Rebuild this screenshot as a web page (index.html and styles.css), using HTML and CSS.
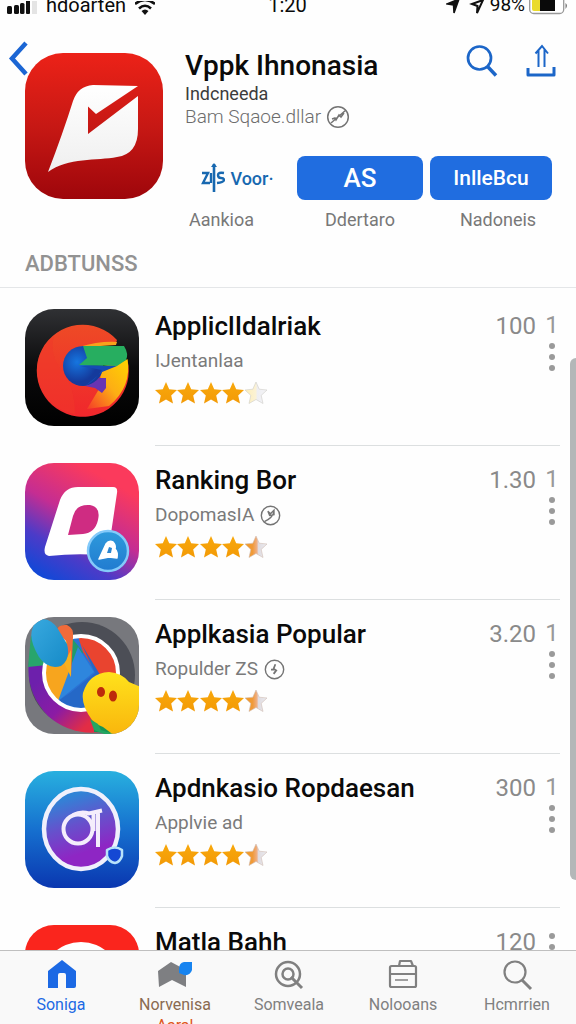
FILE: index.html
```html
<!DOCTYPE html>
<html lang="id">
<head>
<meta charset="utf-8">
<meta name="viewport" content="width=device-width, initial-scale=1">
<title>Vppk Ihnonasia</title>
<link rel="stylesheet" href="styles.css">
</head>
<body>
<svg class="defs" aria-hidden="true">
  <defs>
    <linearGradient id="gold" x1="0" y1="0" x2="0" y2="1"><stop offset="0" stop-color="#f8a80c"/><stop offset="1" stop-color="#f39a06"/></linearGradient>
    <linearGradient id="fade" x1="0" y1="0" x2="1" y2="0"><stop offset="0" stop-color="#fdeeb8"/><stop offset=".5" stop-color="#fbf2d6"/><stop offset=".55" stop-color="#eeeef2"/><stop offset="1" stop-color="#f4f4f6"/></linearGradient>
    <linearGradient id="half" x1="0" y1="0" x2="1" y2="0"><stop offset="0" stop-color="#f39a1c"/><stop offset=".35" stop-color="#f09a3a"/><stop offset=".55" stop-color="#efb088"/><stop offset=".6" stop-color="#dfdbe0"/><stop offset="1" stop-color="#ececf0"/></linearGradient>
    <path id="star" d="M10 0L13.200 7.200 21 8 15.200 13.400 17 21.500 10 17.500 3 21.500 4.800 13.400-1 8 6.800 7.200Z"/>
    <symbol id="stars4" viewBox="-1 0 112 22">
      <g fill="url(#gold)"><use href="#star"/><use href="#star" x="22"/><use href="#star" x="45"/><use href="#star" x="67"/></g>
      <use href="#star" x="90" fill="url(#fade)" stroke="#cfccc8" stroke-width=".6"/>
    </symbol>
    <symbol id="stars45" viewBox="-1 0 112 22">
      <g fill="url(#gold)"><use href="#star"/><use href="#star" x="22"/><use href="#star" x="45"/><use href="#star" x="67"/></g>
      <use href="#star" x="90" fill="url(#half)" stroke="#d0bcb4" stroke-width=".6"/>
    </symbol>
  </defs>
</svg>
<div class="screen">
  <div class="status">
    <div class="status-side">
      <svg viewBox="0 0 30 14" width="30" height="14"><g fill="#111"><rect x="0" y="5" width="5" height="8" rx="1.500"/><rect x="7" y="4" width="5" height="9" rx="1.500"/><rect x="13" y="2" width="4.500" height="11" rx="1.500"/><rect x="19" y="-2" width="4" height="15" rx="1"/></g><rect x="25" y="-2" width="5" height="15" fill="#e4e4e4"/></svg>
      <span>hdoarten</span>
      <svg viewBox="0 0 20 14" width="20" height="14"><g fill="none" stroke="#111" stroke-width="2.600"><path d="M0 3Q10-5 20 3"/><path d="M4 7.500Q10 2 16 7.500"/></g><path d="M6.500 10Q10 7 13.500 10L10 14z" fill="#111"/></svg>
    </div>
    <span>1:20</span>
    <div class="status-side status-end">
      <svg viewBox="0 0 40 16" width="40" height="16"><path d="M1 5L13 0 8 14 7.500 6z" fill="#111" stroke="#111" stroke-width="1.500"/><path d="M26 5L37 1 31 14 31.500 7z" fill="none" stroke="#111" stroke-width="2"/></svg>
      <span class="percent">98%</span>
      <svg viewBox="0 0 39 16" width="39" height="16"><rect x=".7" y="-6" width="34" height="20.500" rx="4" fill="#fff" stroke="#999" stroke-width="1.300"/><path d="M3 0h8v12H5q-2 0-2-2z" fill="#eadb2c"/><path d="M11 0h15v12H11z" fill="#0a0a0a"/><path d="M36.500 4q3 2.500 0 6z" fill="#777"/></svg>
    </div>
  </div>

  <header class="hero">
    <button class="back" aria-label="Back"><svg viewBox="0 0 20 36" width="20" height="36"><path d="M18 2L4 17.500 18 33" fill="none" stroke="#1c66d4" stroke-width="4.500"/></svg></button>
    <svg class="hero-icon" viewBox="0 0 138 146">
      <defs><linearGradient id="red" x1="0" y1="0" x2="0" y2="1"><stop offset="0" stop-color="#ec2218"/><stop offset=".5" stop-color="#c71814"/><stop offset="1" stop-color="#9e060b"/></linearGradient><linearGradient id="paper" x1="0" y1="0" x2="0" y2="1"><stop offset="0" stop-color="#fff"/><stop offset="1" stop-color="#efefef"/></linearGradient></defs>
      <rect width="138" height="146" rx="38" fill="url(#red)"/>
      <path d="M23 119Q38 80 48 48 53 33 68 32L113 33 71 61 63 53.500V81L113 43V76Q113 101 92 104C72 108 43 104 23 119Z" fill="url(#paper)"/>
    </svg>
    <div class="info">
      <div class="headline">
        <h1>Vppk Ihnonasia</h1>
        <div class="tools">
          <button aria-label="Search"><svg viewBox="0 0 32 34" width="32" height="34"><g fill="none" stroke="#1c66c8" stroke-width="2.700"><circle cx="13.500" cy="14" r="11.500"/><path d="M21.500 22.500L30 31.500" stroke-width="3.500"/></g></svg></button>
          <button aria-label="Share"><svg viewBox="0 0 30 34" width="30" height="34"><g fill="none" stroke="#1c66c8" stroke-width="2"><path d="M2 24V31H28V23" stroke-width="3" stroke-linejoin="round"/><path d="M12.500 23V6M18.500 23V5M9.500 9.500L16 2 22 9.500"/></g></svg></button>
        </div>
      </div>
      <p class="maker">Indcneeda</p>
      <p class="origin">Bam Sqaoe.dllar <svg viewBox="0 0 24 24" width="24" height="24"><g fill="none" stroke="#747474" stroke-width="1.500"><circle cx="12" cy="12" r="10.300"/><path d="M5 18L20 5M6 14l3-1 1 2 3-5 2 2 3-4" /></g></svg></p>
      <div class="actions">
        <div><button class="plain" aria-label="Zijs Voor"><svg viewBox="0 0 24 32" width="24" height="32"><g fill="none" stroke="#1768b0" stroke-width="2.400"><path d="M1 11H7L2 21H9M10 11V21M23 11Q17 10 17 13T20 16 23 18 16 21"/><path d="M13 2V30" stroke-width="2.600"/></g><path d="M10 5L13 1 16 5z" fill="#1768b0"/></svg>Voor·</button><span>Aankioa</span></div>
        <div><button class="solid big">AS</button><span>Ddertaro</span></div>
        <div><button class="solid">InlleBcu</button><span>Nadoneis</span></div>
      </div>
    </div>
  </header>

  <h2>ADBTUNSS</h2>

  <main class="list">
    <article class="row">
      <svg class="app" viewBox="0 0 114 117">
        <defs><linearGradient id="blk" x1="0" y1="0" x2="0" y2="1"><stop offset="0" stop-color="#303134"/><stop offset=".5" stop-color="#0b0b0c"/><stop offset="1" stop-color="#000"/></linearGradient><linearGradient id="orb" x1="0" y1="0" x2="0" y2="1"><stop offset="0" stop-color="#ee4a26"/><stop offset="1" stop-color="#f0272c"/></linearGradient><radialGradient id="blu" cx=".35" cy=".4"><stop offset="0" stop-color="#1676e0"/><stop offset="1" stop-color="#143a9c"/></radialGradient><linearGradient id="yel" x1="1" y1="0" x2="0" y2="1"><stop offset="0" stop-color="#ffd400"/><stop offset=".5" stop-color="#fdae14"/><stop offset="1" stop-color="#f43b28"/></linearGradient></defs>
        <rect width="114" height="117" rx="29" fill="url(#blk)"/>
        <path d="M92 31A46 46 0 1 0 102.500 51L75 58 62 37 91 34Z" fill="url(#orb)"/>
        <path d="M29 27Q24 46 37 62T50 105Q24 101 14 74 6 46 29 27Z" fill="#f0382a" opacity=".5"/>
        <path d="M102.500 50Q107 78 84 97L62 100 74 80 76 63 90 57Z" fill="url(#yel)"/>
        <path d="M54 38Q74 32 92 33L91 36 60 38Z" fill="#f9a21c"/>
        <circle cx="58" cy="57" r="20" fill="url(#blu)"/>
        <path d="M58 37H99Q104 45 101 51L92 57 54 56 62 49Z" fill="#27ae60"/>
        <path d="M55 57L92 57 77 63 71 68 60 77Q70 72 77 61Z" fill="#154cb4"/>
        <path d="M60 77Q70 74 74 69L81 69V79L77 84 70 79Z" fill="#6834b2"/>
      </svg>
      <div class="body">
        <div class="text"><h3>AppliclIdalriak</h3><p>IJentanlaa</p><svg class="stars" role="img" aria-label="4 stars"><use href="#stars4"/></svg></div>
        <span class="size">100</span>
        <button class="more" aria-label="More">1<i></i><i></i><i></i></button>
      </div>
    </article>
    <article class="row">
      <svg class="app" viewBox="0 0 114 117">
        <defs><linearGradient id="mix" x1=".15" y1="1" x2=".65" y2=".1"><stop offset="0" stop-color="#0c49d8"/><stop offset=".3" stop-color="#4c3bc8"/><stop offset=".6" stop-color="#c52d92"/><stop offset="1" stop-color="#fb3a5c"/></linearGradient><linearGradient id="badge" x1="0" y1="0" x2="0" y2="1"><stop offset="0" stop-color="#2e9adc"/><stop offset="1" stop-color="#217bd0"/></linearGradient></defs>
        <rect width="114" height="117" rx="29" fill="url(#mix)"/>
        <path d="M24 93Q18 92 20 84L35 37Q40 24 53 24H88Q93 24 92 30L84 84 76 92Q50 90 24 93Z" fill="#fff"/>
        <path d="M43 72L48 53Q51 41 65 42 76 44 73 57 70 70 58 71Z" fill="#cf2c82"/>
        <circle cx="83" cy="88" r="20" fill="url(#badge)" stroke="#84cafa" stroke-width="2.500"/>
        <path d="M74 96L81 81Q84 77 88 79 91 82 90 86 93 89 92 95L84 94Z" fill="#fff" stroke="#fff" stroke-width="1.500" stroke-linejoin="round"/><path d="M82 90L84 84 87 85 86 90Z" fill="#2b86d0"/>
      </svg>
      <div class="body">
        <div class="text"><h3>Ranking Bor</h3><p>DopomasIA <svg viewBox="0 0 24 24" width="21" height="21"><g fill="none" stroke="#747474" stroke-width="1.600"><circle cx="12" cy="12" r="10.500"/><path d="M5 19Q14 15 16 8M9 7l3 3 4-4v5l-5 1z"/></g></svg></p><svg class="stars" role="img" aria-label="4.5 stars"><use href="#stars45"/></svg></div>
        <span class="size">1.30</span>
        <button class="more" aria-label="More">1<i></i><i></i><i></i></button>
      </div>
    </article>
    <article class="row">
      <svg class="app" viewBox="0 0 114 117">
        <defs><clipPath id="tile"><rect width="114" height="117" rx="29"/></clipPath><clipPath id="disc"><circle cx="56" cy="56" r="37"/></clipPath><linearGradient id="pur" x1="0" y1="0" x2="1" y2="1"><stop offset=".2" stop-color="#6d20ac"/><stop offset=".55" stop-color="#8b1ba4"/><stop offset=".85" stop-color="#e22d45"/></linearGradient><linearGradient id="sky" x1="0" y1="0" x2="1" y2="1"><stop offset="0" stop-color="#38a9df"/><stop offset="1" stop-color="#168ac7"/></linearGradient><linearGradient id="sun" x1="0" y1="0" x2="0" y2="1"><stop offset="0" stop-color="#ffe21c"/><stop offset="1" stop-color="#f9b40c"/></linearGradient></defs>
        <g clip-path="url(#tile)">
          <rect width="114" height="117" fill="#77787d"/>
          <circle cx="57" cy="58" r="53" fill="#4c4e56"/>
          <path d="M4 44Q0 75 23 99 46 119 76 115L64 74 22 46Z" fill="url(#pur)"/>
          <path d="M6 18L22 48 3 50Z" fill="#28a56c"/>
          <circle cx="56" cy="56" r="37" fill="#2b72d4"/>
          <g clip-path="url(#disc)"><path d="M18 16H46L46 66 33 84 18 76Z" fill="#f7a51e"/><path d="M52 16H96V62H76L58 35Z" fill="#e9442f"/><path d="M46 20L58 35 46 62Z" fill="#209a6c"/><path d="M57 28L70 56 45 76 33 84 66 96 80 66Z" fill="#2568c7"/><path d="M53 30L69 55 33 84Z" fill="#2e86dd"/></g>
          <circle cx="56" cy="56" r="37" fill="none" stroke="#fff" stroke-width="4"/>
          <path d="M31 14Q33 7 42 8 49 11 48 20L46 60 40 42 42 25Z" fill="#f06b3a"/>
          <path d="M46 33V60L39 46Z" fill="#f7b01e"/>
          <path d="M10 4Q24-2 33 12L42 27Q46 42 36 49 23 53 14 40 4 23 7 13Z" fill="url(#sky)"/>
          <path d="M67 103Q56 88 58 76 64 56 84 55 97 56 104 65L116 70V120H82Z" fill="url(#sun)"/>
          <ellipse cx="76" cy="75" rx="4" ry="5" fill="#bd2b0b"/><ellipse cx="88" cy="79" rx="4" ry="5.500" fill="#bd2b0b"/>
          <path d="M69 115V106L78 110 86 116Z" fill="#169455"/><path d="M65 102L73 107 76 113 88 117H79L69 113Z" fill="#24a662"/>
        </g>
      </svg>
      <div class="body">
        <div class="text"><h3>Applkasia Popular</h3><p>Ropulder ZS <svg viewBox="0 0 24 24" width="21" height="21"><g fill="none" stroke="#747474" stroke-width="1.600"><circle cx="12" cy="12" r="10.500"/><path d="M13 6l-2 5 3 2-3 4M8 12h4" stroke-width="2"/></g></svg></p><svg class="stars" role="img" aria-label="4.5 stars"><use href="#stars45"/></svg></div>
        <span class="size">3.20</span>
        <button class="more" aria-label="More">1<i></i><i></i><i></i></button>
      </div>
    </article>
    <article class="row">
      <svg class="app" viewBox="0 0 114 117">
        <defs><linearGradient id="sea" x1="0" y1="0" x2="0" y2="1"><stop offset="0" stop-color="#28b0df"/><stop offset=".5" stop-color="#1670cf"/><stop offset="1" stop-color="#0a37b0"/></linearGradient><linearGradient id="vio" x1=".3" y1="0" x2=".6" y2="1"><stop offset=".1" stop-color="#3183d6"/><stop offset=".45" stop-color="#6750cc"/><stop offset=".8" stop-color="#8e26c4"/></linearGradient></defs>
        <rect width="114" height="117" rx="29" fill="url(#sea)"/>
        <ellipse cx="56" cy="58" rx="37" ry="40" fill="url(#vio)" stroke="#f0f0fc" stroke-width="4.500"/>
        <g fill="none" stroke="#f5edfc" stroke-width="4"><circle cx="53" cy="58" r="14.500"/><path d="M48 44Q56 40 64 42.500L77 39.500M73 41V76M68.500 43V60"/></g>
        <path d="M82 79Q90 74 97 79V85Q95 91 90 92 84 91 82 85Z" fill="#1548d4" stroke="#b8e3fa" stroke-width="2.500" stroke-linejoin="round"/>
      </svg>
      <div class="body">
        <div class="text"><h3>Apdnkasio Ropdaesan</h3><p>Applvie ad</p><svg class="stars" role="img" aria-label="4.5 stars"><use href="#stars45"/></svg></div>
        <span class="size">300</span>
        <button class="more" aria-label="More">1<i></i><i></i><i></i></button>
      </div>
    </article>
    <article class="row">
      <svg class="app" viewBox="0 0 114 117"><rect width="114" height="117" rx="29" fill="#fa251d"/><circle cx="56" cy="57" r="40" fill="#fff"/></svg>
      <div class="body">
        <div class="text"><h3>Matla Bahh</h3></div>
        <span class="size">120</span>
        <button class="more dots-only" aria-label="More"><i></i><i></i><i></i></button>
      </div>
    </article>
  </main>
  <div class="scrollbar"></div>

  <nav class="tabs">
    <a href="#" class="active"><svg viewBox="0 0 32 32" width="32" height="32"><path d="M3 12L17 1 31 12V27Q31 29 29 29H21V16Q21 14 19 14H15Q13 14 13 16V29H3Z" fill="#1c69e4"/></svg>Soniga</a>
    <a href="#" class="warm"><svg viewBox="0 0 36 32" width="36" height="32"><path d="M1 12L14 3 29 11V28L15 21 2 28Z" fill="#7e7f82"/><path d="M22 10Q22 4 27 3H35V11Q33 17 27 16L22 14Z" fill="#1784f0"/></svg>Norvenisa<span class="under">Aaral</span></a>
    <a href="#"><svg viewBox="0 0 32 32" width="32" height="32"><g fill="none" stroke="#808080" stroke-width="2.500"><circle cx="15" cy="15" r="12"/><circle cx="15" cy="15" r="5.500"/><path d="M18 18L29 29" stroke-width="3"/></g></svg>Somveala</a>
    <a href="#"><svg viewBox="0 0 32 32" width="32" height="32"><g fill="none" stroke="#808080" stroke-width="2.200" stroke-linejoin="round"><rect x="3" y="7" width="26" height="21" rx="1.500"/><path d="M12 7L13 2H24L26 7M4 15H28"/><path d="M8 21H21" stroke-width="1.500"/></g></svg>Nolooans</a>
    <a href="#"><svg viewBox="0 0 32 32" width="32" height="32"><g fill="none" stroke="#808080" stroke-width="2.200"><circle cx="14" cy="13" r="10.500"/><path d="M21 21L30 30" stroke-width="3"/></g></svg>Hcmrrien</a>
  </nav>
</div>
</body>
</html>
```

FILE: styles.css
```css
* { box-sizing: border-box; margin: 0; padding: 0; }
body { font-family: Roboto, "Liberation Sans", sans-serif; color: #0a0a0a; background: #fefefe; }
button { font: inherit; border: 0; background: none; cursor: pointer; }
svg { display: block; flex: none; }
.defs { position: absolute; width: 0; height: 0; }
.screen { position: relative; display: flex; flex-direction: column; height: 100vh; overflow: hidden; }

.status { display: flex; align-items: flex-end; height: 16px; padding: 0 8px 0 7px; font-size: 20px; line-height: 22px; flex: none; }
.status-side { display: flex; flex: 1; align-items: flex-end; gap: 9px; }
.status-end { justify-content: flex-end; gap: 4px; }
.status-side svg { margin-bottom: 1px; }
.percent { font-size: 19px; }

.hero { position: relative; display: flex; gap: 22px; padding: 32px 24px 0 25px; flex: none; }
.back { position: absolute; left: 8px; top: 25px; }
.hero-icon { width: 138px; height: 146px; margin-top: 5px; }
.info { flex: 1; min-width: 0; }
.headline { display: flex; justify-content: space-between; align-items: flex-end; height: 36px; }
.headline h1 { font-size: 28px; line-height: 36px; font-weight: 500; white-space: nowrap; }
.tools { display: flex; gap: 28px; padding-bottom: 6px; margin-right: -4px; }
.maker { font-size: 18px; line-height: 20px; color: #3c3c3c; }
.origin { display: flex; align-items: center; gap: 5px; font-size: 19px; line-height: 26px; height: 26px; color: #6c6c6c; font-weight: 300; }
.actions { display: grid; grid-template-columns: 105px 126fr 122fr; gap: 7px; margin-top: 26px; text-align: center; }
.actions span { display: block; margin-top: 8px; font-size: 18px; line-height: 24px; color: #787878; }
.actions div:first-child span { padding-right: 32px; }
.actions div:last-child span { padding-left: 14px; }
.actions button { display: flex; align-items: center; justify-content: center; gap: 5px; width: 100%; height: 44px; }
.solid { border-radius: 8px; background: #206de0; color: #fff; font-size: 21px; font-weight: 500; }
.actions .big { font-size: 26px; }
.plain { color: #1768b0; font-size: 18px; font-weight: 500; }

h2 { padding: 18px 25px 9px; border-bottom: 1px solid #e4e6e8; font-size: 22px; line-height: 28px; font-weight: 500; color: #929292; flex: none; }

.list { flex: 1; min-height: 0; overflow: hidden; padding-top: 4px; }
.row { display: flex; gap: 16px; padding: 0 16px 0 25px; height: 154px; }
.app { width: 114px; height: 117px; margin-top: 17px; }
.body { display: flex; flex: 1; min-width: 0; border-bottom: 1px solid #dcdfe0; padding-top: 16px; }
.text { flex: 1; min-width: 0; }
.text h3 { font-size: 26px; line-height: 36px; font-weight: 500; white-space: nowrap; }
.text p { display: flex; align-items: center; gap: 6px; font-size: 19px; line-height: 24px; margin-top: 5px; height: 24px; color: #7a7a7a; }
.stars { width: 112px; height: 22px; margin-top: 9px; }
.size { font-size: 24px; line-height: 36px; color: #8a8a8a; }
.more { display: flex; flex-direction: column; align-items: center; gap: 5px; align-self: flex-start; width: 16px; margin-left: 8px; font-size: 24px; line-height: 34px; color: #999; }
.more i { width: 6px; height: 6px; border-radius: 50%; background: #9a9a9a; }
.more i:first-of-type { margin-top: -4px; }
.dots-only { padding-top: 13px; }
.scrollbar { position: absolute; right: 0; top: 358px; bottom: 144px; width: 6px; border-radius: 6px 0 0 6px; background: #b3b7b8; }

.tabs { display: grid; grid-template-columns: repeat(5, 1fr); height: 74px; padding: 8px 2px 0 4px; border-top: 1px solid #bfbfbf; background: #f9f9f9; overflow: hidden; flex: none; }
.tabs a { display: flex; flex-direction: column; align-items: center; font-size: 16px; line-height: 26px; color: #808080; text-decoration: none; }
.tabs svg { margin-bottom: 1px; }
.tabs .active { color: #1c69e4; }
.tabs .warm { color: #8a6a50; }
.under { color: #e0561c; line-height: 16px; }
```
